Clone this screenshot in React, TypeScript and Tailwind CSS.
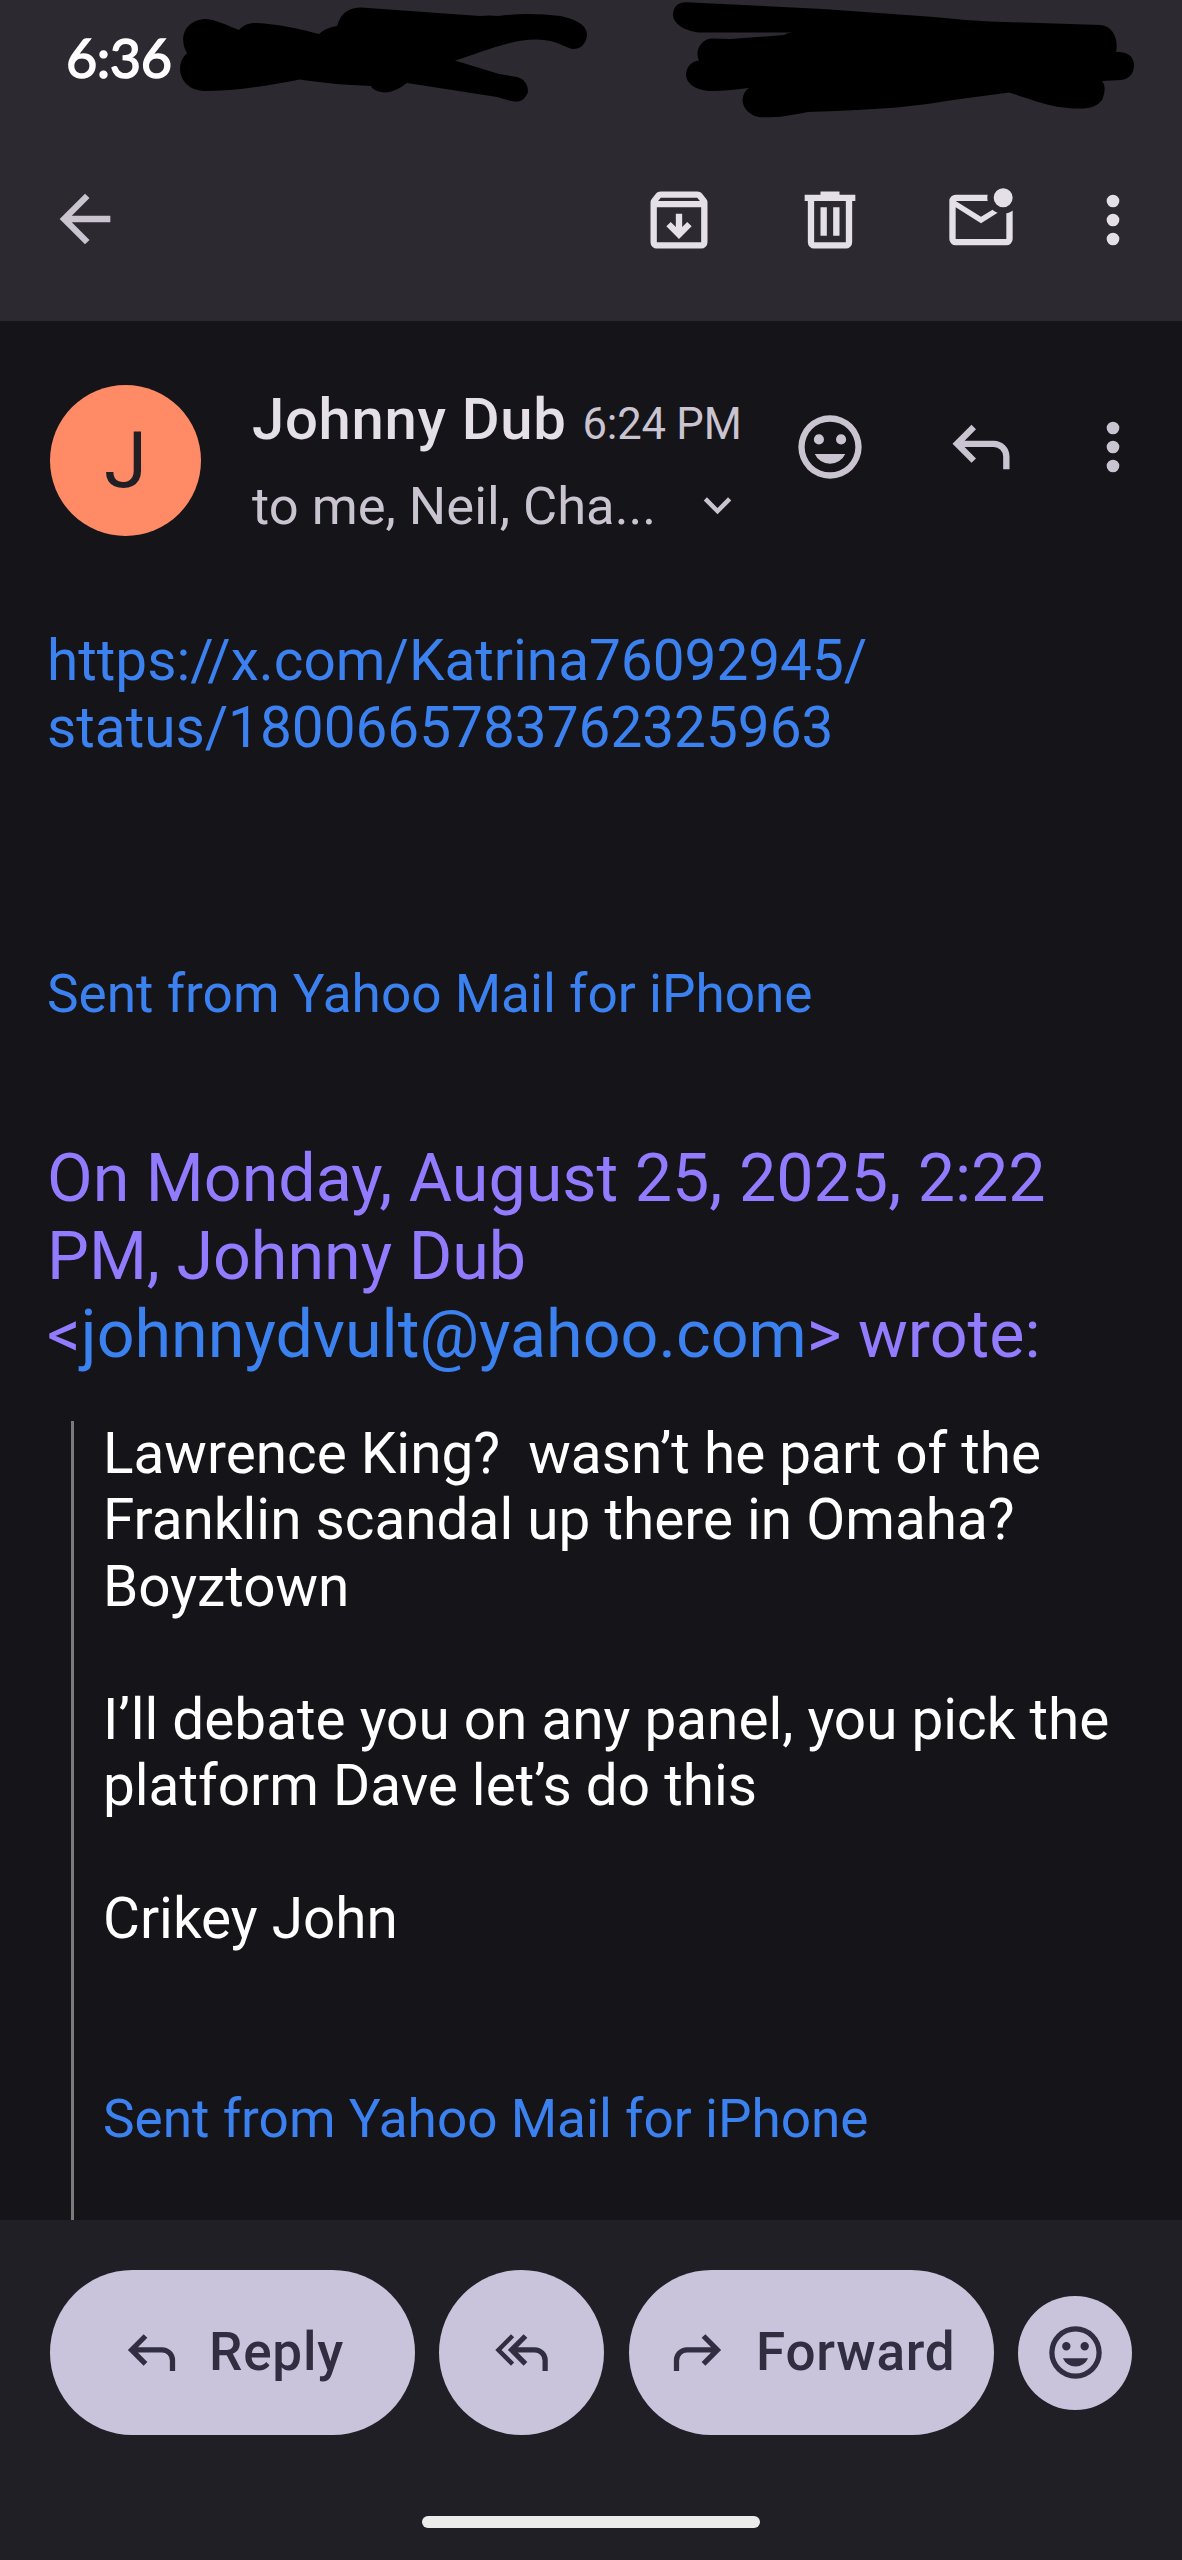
import React from 'react';

type IconProps = {
  path: string
  className: string
}

const icons = {
  back: 'M7.825 13l5.6 5.6L12 20l-8-8 8-8 1.425 1.4-5.6 5.6H20v2z',
  archive: 'M5 21q-.825 0-1.412-.587T3 19V6.525q0-.35.113-.675t.337-.6L4.7 3.725q.275-.35.687-.538T6.25 3h11.5q.45 0 .863.188t.687.537l1.25 1.525q.225.275.338.6t.112.675V19q0 .825-.587 1.413T19 21zm.4-15h13.2l-.85-1H6.25zM5 8v11h14V8zm7 10l4-4-1.4-1.4-1.6 1.6V10h-2v4.2l-1.6-1.6L8 14z',
  trash: 'M7 21q-.825 0-1.412-.587T5 19V6H4V4h5V3h6v1h5v2h-1v13q0 .825-.587 1.413T17 21zM17 6H7v13h10zM9 17h2V8H9zm4 0h2V8h-2z',
  unread: 'M4 20q-.825 0-1.412-.587T2 18V6q0-.825.588-1.412T4 4h10.1q-.1.5-.1 1t.1 1H4l8 5 3.65-2.275q.35.325.763.563t.862.412L12 13 4 8v10h16V9.9q.575-.125 1.075-.35T22 9v9q0 .825-.587 1.413T20 20zM19 8q-1.25 0-2.125-.875T16 5t.875-2.125T19 2t2.125.875T22 5t-.875 2.125T19 8',
  more: 'M12 8a2 2 0 1 1 0-4 2 2 0 0 1 0 4zm0 6a2 2 0 1 1 0-4 2 2 0 0 1 0 4zm0 6a2 2 0 1 1 0-4 2 2 0 0 1 0 4z',
  chevron: 'M12 15.4l-6-6L7.4 8l4.6 4.6L16.6 8 18 9.4z',
  reply: 'M19 19v-4q0-1.25-.875-2.125T16 12H6.825l3.6 3.6L9 17l-6-6 6-6 1.425 1.4-3.6 3.6H16q2.075 0 3.538 1.463T21 15v4z',
  replyAll: 'M8 17l-6-6 6-6 1.2 1.2L4.4 11l4.8 4.8zM20 19v-4q0-1.25-.875-2.125T17 12h-6.375l3.6 3.6L12.8 17l-6-6 6-6 1.425 1.4-3.6 3.6H17q2.075 0 3.538 1.463T22 15v4z',
  forward: 'M5 19v-4q0-1.25.875-2.125T8 12h9.175l-3.6 3.6L15 17l6-6-6-6-1.425 1.4 3.6 3.6H8q-2.075 0-3.538 1.463T3 15v4z',
  smile: 'M12 22a10 10 0 1 1 0-20 10 10 0 0 1 0 20zM12 4a8 8 0 1 0 0 16 8 8 0 0 0 0-16zM8.5 11.2a1.6 1.6 0 1 1 0-3.2 1.6 1.6 0 0 1 0 3.2zm7 0a1.6 1.6 0 1 1 0-3.2 1.6 1.6 0 0 1 0 3.2zM12 17.3q-1.6 0-2.9-.85T7.2 14.2h9.6q-.6 1.4-1.9 2.25t-2.9.85z',
}

const Icon = ({ path, className }: IconProps) => (
  <svg viewBox="0 0 24 24" fill="currentColor" className={className}>
    <path d={path} />
  </svg>
)

// rabiscos pretos por cima da barra de status
const Scribbles = () => (
  <svg viewBox="0 0 1182 130" className="absolute left-0 top-0 w-[1182px] h-[130px]">
    <path d="M187 53C180 42 181 22 204 19C215 19 226 25 239 30C244 24 250 23 256 23C278 24 300 29 319 34C325 29 330 27 337 26C341 12 350 7.500 361 7.500L480 16Q489 15 498 16C520 13 543 14 560 16C580 20 587 27 587 35C586 45 580 49 573 49C565 48 558 40 537 39.500C510 39 478 54 455 60.500L499 74L517 77C525 79 528 85 528 92C525 100 520 102 515 101.500C508 101 502 98 497 97C467 92 437 88 407 83C399 89 393 92 385 92.500C378 92 373 90 371 86C345 85 322 83 300 79.500C266 86 235 91 204 91C188 90 180 80 180 68Q180 60 187 53Z" />
    <path d="M686 2.300L823 9L934 17Q962 20 990 21.500L1101 25C1112 26 1119 38 1116 52C1128 51 1134 57 1134 65C1134 74 1129 79 1121 80L1102 81C1106 86 1105 93 1102 100C1098 106 1091 108.500 1079 108.500C1050 108 1037 101 1009 92.500L953 100Q925 105 897 107.500C866 110 837 111 808 112C796 114 784 117 771 117.300H760C750 116 742.500 108 742.500 100Q743 92 749 88C737 89 725 91 713 91C696 91 686 84 686 74C687 66 692 61 699 60.500C694 50 702 38 713 38.500L730 39L784 35Q788 32 793 32.500H700C682 31 673 22 673 15C673 7 678 2 686 2.300Z" />
  </svg>
)

const quoteLines = [
  'Lawrence King?\u00a0 wasn’t he part of the',
  'Franklin scandal up there in Omaha?',
  'Boyztown',
  '',
  'I’ll debate you on any panel, you pick the',
  'platform Dave let’s do this',
  '',
  'Crikey John',
  '',
  '',
]

const App = () => {
  return (
    <main className="flex flex-col w-[1182px] h-[2560px] overflow-hidden bg-[#151419] font-['Roboto',sans-serif]">
      <header className="relative h-[321px] shrink-0 bg-[#2d2930] text-[#e5e0e8]">
        <div className="h-[130px] pl-[66px] pt-[28px]">
          <span className="block font-['Lato',sans-serif] text-[54px] leading-[60px] tracking-[-0.5px] text-white [-webkit-text-stroke:1.5px_white]">6:36</span>
        </div>
        <Scribbles />
        <div className="flex items-center pt-[51px] pl-[47px] pr-[31px]">
          <Icon path={icons.back} className="size-[76px] mb-[2px] text-[#c9c4d0] mr-auto" />
          <Icon path={icons.archive} className="size-[76px] mr-[75px]" />
          <Icon path={icons.trash} className="size-[76px] mr-[75px]" />
          <Icon path={icons.unread} className="size-[76px] mr-[56px]" />
          <Icon path={icons.more} className="size-[76px]" />
        </div>
      </header>

      <section className="flex h-[307px] shrink-0 pl-[50px] pr-[31px] text-[#c9c4d0]">
        <div className="mt-[64px] size-[151px] rounded-full bg-[#ff8b66] text-[#201f25] flex justify-center items-center text-[78px]">J</div>
        <div className="ml-[51px] mt-[63px] w-[500px] whitespace-nowrap">
          <div className="flex items-baseline gap-[16px] h-[82px]">
            <span className="text-[58px] leading-[70px] font-medium tracking-[0.7px] text-[#e5e0e8]">Johnny Dub</span>
            <span className="text-[43.6px] leading-[70px] tracking-[-0.2px]">6:24 PM</span>
          </div>
          <div className="flex items-center h-[80px]">
            <span className="text-[52.5px] leading-[80px]">to me, Neil, Cha...</span>
            <Icon path={icons.chevron} className="size-[55px] ml-[34px]" />
          </div>
        </div>
        <div className="flex ml-auto mt-[88px]">
          <Icon path={icons.smile} className="size-[76px] mr-[75px]" />
          <Icon path={icons.reply} className="size-[76px] mr-[56px]" />
          <Icon path={icons.more} className="size-[76px]" />
        </div>
      </section>

      <article className="flex-1 min-h-0 overflow-hidden pl-[47px] text-[56.7px] leading-[66.5px] whitespace-nowrap">
        <a className="block text-[#3c81f0]">
          https://x.com/Katrina76092945/<br />status/1800665783762325963
        </a>
        <a className="block mt-[199.5px] text-[53.15px] text-[#3c81f0]">Sent from Yahoo Mail for iPhone</a>
        <div className="mt-[111.5px] text-[66.4px] leading-[78px] text-[#927bff]">
          On Monday, August 25, 2025, 2:22<br />
          PM, Johnny Dub<br />
          &lt;<span className="text-[#3c81f0]">johnnydvult@yahoo.com</span>&gt; wrote:
        </div>
        <blockquote className="mt-[48px] ml-[24px] h-[900px] border-l-[3px] border-[#7b7a7c] pl-[29px] text-white">
          {quoteLines.map((line, i) => (
            <p key={i} className="h-[66.5px]">{line}</p>
          ))}
          <a className="block text-[53.15px] text-[#3c81f0]">Sent from Yahoo Mail for iPhone</a>
        </blockquote>
      </article>

      <footer className="h-[340px] shrink-0 bg-[#201f25] text-[#322e41] pt-[50px]">
        <div className="flex items-center gap-[24px] pl-[50px] text-[53px] font-medium tracking-[0.8px]">
          <button className="flex items-center w-[365px] h-[165px] rounded-full bg-[#c9c4dc] pl-[70px]">
            <Icon path={icons.reply} className="size-[63px]" />
            <span className="ml-[26px]">Reply</span>
          </button>
          <button className="flex items-center justify-center size-[165px] rounded-full bg-[#c9c4dc]">
            <Icon path={icons.replyAll} className="size-[63px]" />
          </button>
          <button className="flex items-center ml-px w-[365px] h-[165px] rounded-full bg-[#c9c4dc] pl-[37px]">
            <Icon path={icons.forward} className="size-[63px]" />
            <span className="ml-[27px]">Forward</span>
          </button>
          <button className="flex items-center justify-center size-[114px] rounded-full bg-[#c9c4dc]">
            <Icon path={icons.smile} className="size-[63px]" />
          </button>
        </div>
        <div className="mt-[81px] mx-auto w-[338px] h-[12px] rounded-full bg-[#ececec]" />
      </footer>
    </main>
  );
};

export default App;
